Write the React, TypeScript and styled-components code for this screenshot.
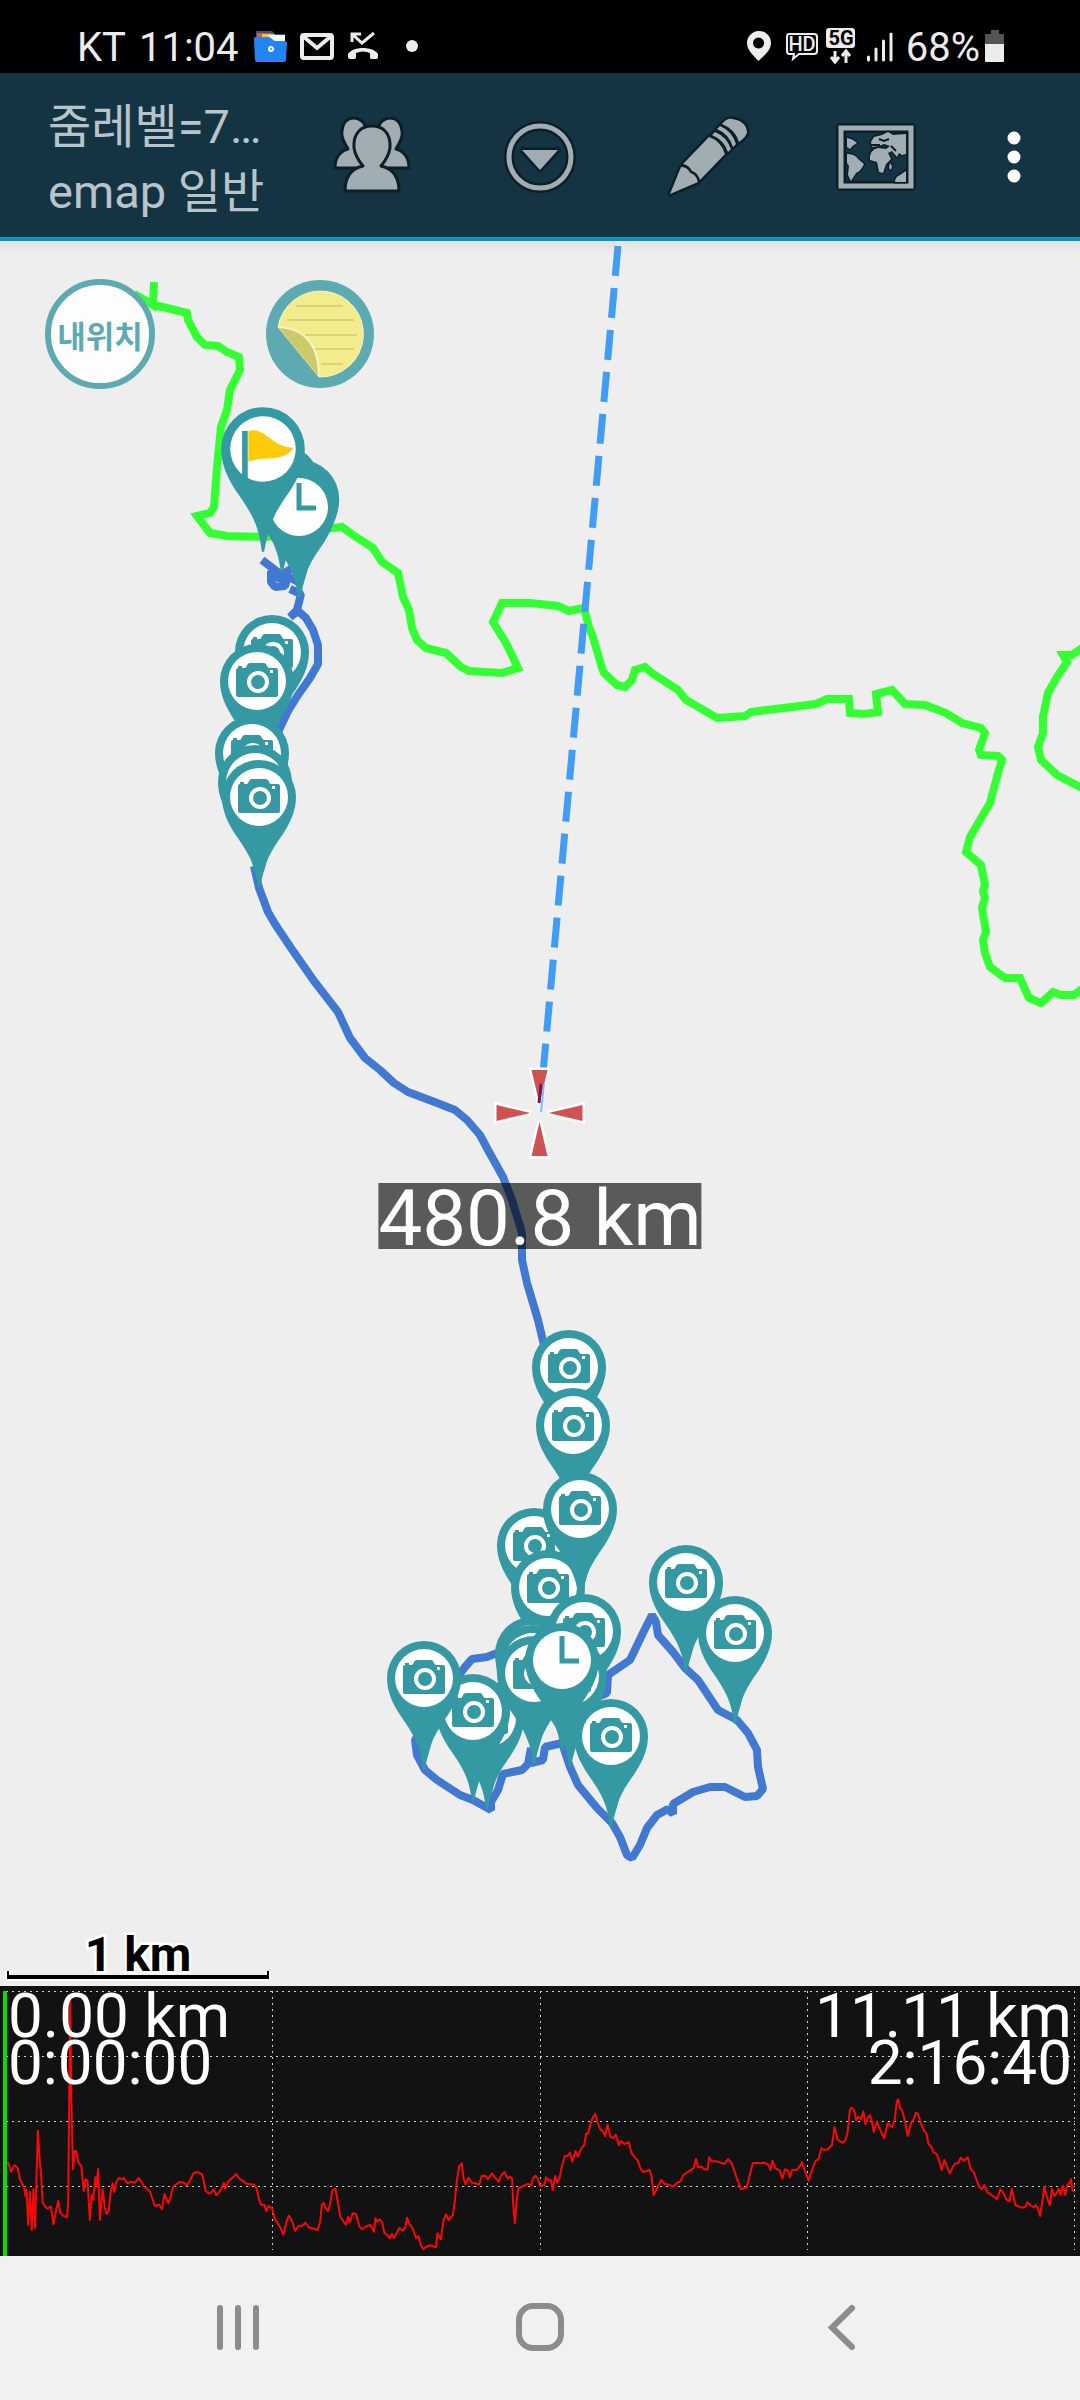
import React from 'react';
import styled, { createGlobalStyle } from 'styled-components';

const teal = '#3499a2';
const iconGrey = '#a0adb3';
const iconEdge = '#0c1f29';

const GlobalStyle = createGlobalStyle`
  *, *::before, *::after { box-sizing: border-box; }
  body {
    margin: 0;
    background: #eeeeee;
    font-family: Roboto, "Noto Sans CJK KR", sans-serif;
  }
  button { font-family: inherit; border: 0; padding: 0; background: none; cursor: pointer; }
  svg { display: block; }
`;

const Screen = styled.div`
  display: flex;
  flex-direction: column;
  min-height: 100vh;
`;

/* ---------- status bar ---------- */

const StatusBar = styled.div`
  display: flex;
  align-items: center;
  justify-content: space-between;
  height: 73px;
  padding: 18px 75px 0 77px;
  background: #000;
  color: #ececec;
  font-size: 40px;
`;

const StatusGroup = styled.div<{ $gap: number }>`
  display: flex;
  align-items: center;
  gap: ${(p) => p.$gap}px;
`;

const StatusText = styled.span`
  padding-top: 4px;
  line-height: 48px;
`;

function FolderIcon() {
  return (
    <svg width="35" height="32" viewBox="-2 0 35 32">
      <path d="M2 1h16l3 3h10v10H2z" fill="#2b5d8c" />
      <path d="M3 3h14l4 4h-18z" fill="#e0563c" />
      <path d="M8 4h12l4 4H8z" fill="#f3c23c" />
      <path d="M14 5h17v8H20z" fill="#fff" />
      <path d="M0 9q0-2 2-2h12q2 0 4 2l2 1.500q1 .5 2 .5h9q2 0 2 2l-1 17q0 2-2 2H3q-2 0-2-2z" fill="#2384f3" />
      <circle cx="17" cy="19" r="2" fill="none" stroke="#fff" strokeWidth="2" />
    </svg>
  );
}

function MailIcon() {
  return (
    <svg width="34" height="28" viewBox="0 0 34 28" fill="none" stroke="#ececec" strokeWidth="4">
      <rect x="2" y="3" width="30" height="23" rx="2" />
      <path d="M4 5l13 11L30 5" />
    </svg>
  );
}

function MissedCallIcon() {
  return (
    <svg width="32" height="30" viewBox="0 0 32 30">
      <path d="M5 11V3h9M5 3l10 9L27 2" fill="none" stroke="#ececec" strokeWidth="3" />
      <path d="M1 26v-3c5-8 25-8 30 0v3q0 2-2 2h-5q-1 0-1-2v-4q-7-3-14 0v4q0 2-1 2H3q-2 0-2-2z" fill="#ececec" />
    </svg>
  );
}

const MoreDot = styled.span`
  width: 12px;
  height: 12px;
  margin-left: 14px;
  border-radius: 50%;
  background: #ececec;
`;

function LocationIcon() {
  return (
    <svg width="36" height="38" viewBox="0 0 36 38">
      <path fillRule="evenodd" d="M12.500 4A12 12 0 0 1 25 16c0 7-6 12-12.500 18C7 28 1 23 1 16A12 12 0 0 1 12.500 4zm0 6.500a5.500 5.500 0 1 0 .1 0z" fill="#ececec" />
    </svg>
  );
}

function HdIcon() {
  return (
    <svg width="36" height="38" viewBox="0 0 36 38">
      <path d="M3 7h25q3 0 3 3v14q0 3-3 3H13l-6 5 1-5H3q-2 0-2-3V10q0-3 2-3z" fill="none" stroke="#ececec" strokeWidth="2" />
      <text x="16" y="24" textAnchor="middle" fontSize="20" fontWeight="500" fill="#ececec">HD</text>
    </svg>
  );
}

function NetworkIcon() {
  return (
    <svg width="36" height="38" viewBox="0 0 36 38">
      <rect x="0" y="1" width="29" height="20" rx="3" fill="#ececec" />
      <text x="15" y="18" textAnchor="middle" fontSize="20" fontWeight="700" fill="#000">5G</text>
      <path d="M9 24v11M5 30l4 5 4-5M20 36V25M16 29l4-5 4 5" fill="none" stroke="#ececec" strokeWidth="3" />
    </svg>
  );
}

function SignalIcon() {
  return (
    <svg width="36" height="38" viewBox="0 0 36 38" stroke="#ececec" strokeWidth="3" strokeLinecap="round">
      <path d="M2.500 30v3M10 22v11M17.500 14v19M25 7v26" />
    </svg>
  );
}

function BatteryIcon() {
  return (
    <svg width="21" height="38" viewBox="0 0 21 38">
      <path d="M7 3h8v4h4q1 0 1 1v11H1V8q0-1 1-1h5z" fill="#555" />
      <path d="M1 17h19v17q0 1-1 1H2q-1 0-1-1z" fill="#ececec" />
    </svg>
  );
}

/* ---------- app header ---------- */

const Header = styled.header`
  display: flex;
  align-items: center;
  height: 168px;
  padding: 4px 12px 0 48px;
  background: #143444;
  border-bottom: 4px solid #0d93bf;
`;

const Titles = styled.div`
  flex: 1;
  min-width: 0;
  padding-top: 4px;
  color: #b8c4c9;
  font-size: 47px;
  line-height: 65px;
  white-space: nowrap;
`;

const Title = styled.h1`
  margin: 0;
  font: inherit;
`;

const Subtitle = styled.p`
  margin: 0;
`;

const HeaderButton = styled.button<{ $width: number }>`
  display: flex;
  align-items: center;
  justify-content: center;
  width: ${(p) => p.$width}px;
  height: 160px;
`;

function PeopleIcon() {
  return (
    <svg width="80" height="80" viewBox="0 0 80 80" fill={iconGrey} stroke={iconEdge} strokeWidth="3" strokeLinejoin="round">
      <path d="M3 51c0-13 8-18 13-19-4-7-7-12-6-18 1-10 7-13 12-13s12 4 12 13c0 7-3 12-6 18 5 2 12 6 12 19z" />
      <path d="M40 51c0-13 7-17 12-19-3-6-6-11-6-18 0-9 7-13 12-13s11 3 12 13c1 6-2 11-6 18 5 1 13 6 13 19z" />
      <path d="M13 74c0-17 9-23 18-25-5-6-8-11-9-18C21 15 30 9 40 9s19 6 18 22c-1 7-4 12-9 18 9 2 18 8 18 25z" />
    </svg>
  );
}

function DropdownCircleIcon() {
  return (
    <svg width="80" height="80" viewBox="0 0 80 80">
      <circle cx="40" cy="40" r="31" fill="none" stroke={iconEdge} strokeWidth="10" />
      <circle cx="40" cy="40" r="31" fill="none" stroke={iconGrey} strokeWidth="5" />
      <path d="M22 33h36L40 53z" fill={iconGrey} stroke={iconEdge} strokeWidth="5" strokeLinejoin="round" paintOrder="stroke" />
    </svg>
  );
}

function PencilIcon() {
  return (
    <svg width="84" height="84" viewBox="0 0 84 84" fill={iconGrey} stroke={iconEdge} strokeWidth="5" strokeLinejoin="round" paintOrder="stroke">
      <path d="M4 79L15 52q6 0 9 5 7 3 8 10z" />
      <path d="M17 49l26-27q12 4 16 17L34 65q-2-7-8-9-3-6-9-7z" />
      <path d="M46 20q12 5 16 17l3-3Q61 22 49 17z" />
      <path d="M51 14q12 5 16 18l3-3Q66 16 54 11z" />
      <path d="M56 9q5-6 10-5Q80 6 81 17q0 4-8 10Q69 14 56 9z" />
    </svg>
  );
}

function WorldMapIcon() {
  return (
    <svg width="82" height="76" viewBox="0 0 82 76">
      <path d="M6 9h70v58H6z" fill="none" stroke={iconEdge} strokeWidth="10" strokeLinejoin="round" />
      <path d="M6 9h70v58H6z" fill="none" stroke={iconGrey} strokeWidth="5" />
      <g fill={iconGrey} stroke={iconEdge} strokeWidth="3" strokeLinejoin="round" paintOrder="stroke">
        <path d="M12 19q6 1 10 5-4 2-7 6l-3-2zM12 35q8 0 11 5l6 5q-3 7-8 9l-5 8-3-6 1-9-2-3z" />
        <path d="M36 23l3-5 8-2 6-3 5 3 13-1v20l-4 1-3-2-2 4-5-6-4 2 3 6-5 5-3 9-4-1-2-10-7-2q-1-10 8-12l8 1 4-3-6-2-5 2-7 1z" />
        <path d="M55 44l2 3-1 4-2-2zM71 52v11H60q0-5 5-7z" />
      </g>
      <path d="M36 26h9M44 20l5 2 5-2M56 27l5 5" stroke={iconEdge} strokeWidth="2" fill="none" />
    </svg>
  );
}

function OverflowIcon() {
  return (
    <svg width="14" height="52" viewBox="0 0 14 52" fill="#fff">
      <circle cx="7" cy="7" r="6.500" />
      <circle cx="7" cy="26" r="6.500" />
      <circle cx="7" cy="45" r="6.500" />
    </svg>
  );
}

/* ---------- map ---------- */

const MapArea = styled.main`
  position: relative;
  flex: 1;
  min-height: 600px;
  overflow: hidden;
  background: linear-gradient(#e2e2e2, #eeeeee 14px);
`;

const MapCanvas = styled.svg`
  position: absolute;
  inset: 0;
  width: 100%;
  height: 100%;
`;

const MapTools = styled.div`
  position: absolute;
  top: 38px;
  left: 45px;
  display: flex;
  gap: 110px;
`;

const RoundButton = styled.button`
  display: flex;
  align-items: center;
  justify-content: center;
  width: 110px;
  height: 110px;
  border-radius: 50%;
`;

const MyLocationButton = styled(RoundButton)`
  border: 6px solid #5daab2;
  background: rgba(255, 255, 255, 0.88);
  color: #5daab2;
  font-size: 31px;
  font-weight: 700;
  white-space: nowrap;
`;

const DistanceLabel = styled.output`
  position: absolute;
  top: 54%;
  left: 50%;
  transform: translateX(-50%);
  height: 66px;
  background: rgba(0, 0, 0, 0.625);
  color: #fff;
  font-size: 78px;
  line-height: 72px;
  white-space: nowrap;
`;

const ScaleBar = styled.div`
  position: absolute;
  left: 7px;
  bottom: 7px;
  width: 262px;
`;

const ScaleText = styled.div`
  color: #000;
  font-size: 48px;
  font-weight: 700;
  line-height: 32px;
  text-align: center;
  -webkit-text-stroke: 5px #fff;
  paint-order: stroke fill;
`;

const ScaleLine = styled.div`
  height: 8px;
  border: solid #000;
  border-width: 0 2px 4px;
  filter: drop-shadow(2px 0 0 #fff) drop-shadow(-2px 0 0 #fff) drop-shadow(0 2px 0 #fff);
`;

const NoteIcon = () => (
  <svg width="110" height="110" viewBox="0 0 110 110">
    <circle cx="55" cy="55" r="54" fill="#5daab2" />
    <path d="M13 48A43 43 0 1 1 54 98z" fill="#f3ec8c" stroke="#f8f4c4" strokeWidth="1" />
    <g stroke="#d8d27c" strokeWidth="2">
      <path d="M31 27h47M22 41h67M40 56h52M50 70h39M56 85h22" />
    </g>
    <path d="M13 48Q54 50 54 98z" fill="#cccb69" />
    <path d="M13 48Q54 50 54 98" fill="none" stroke="#f8f4c4" strokeWidth="2" />
  </svg>
);

type PinKind = 'camera' | 'clock' | 'flag' | 'plain';

function Pin({ x, y, kind = 'camera', size = 1 }: { x: number; y: number; kind?: PinKind; size?: number }) {
  return (
    <g transform={`translate(${x} ${y}) scale(${size})`}>
      <path d="M-1 91C-2 84-3 77-5 71-9 58-17 47-24 37-31 26-37 14-37 0A37 37 0 0 1 37 0C37 14 31 26 24 37 17 47 9 58 6 71 4 77 2 84 1 91z" fill={teal} />
      {kind !== 'plain' && <circle r="29" fill="#fff" />}
      {kind === 'camera' && (
        <g>
          <path d="M-21-11q0-2 2-2v-2h4v2h3q1 0 2-3 1-2 3-2h14q2 0 3 3 1 2 2 2h7q2 0 2 2v25q0 2-2 2h-38q-2 0-2-2z" fill={teal} />
          <circle cx="1" cy="1" r="9" fill="none" stroke="#fff" strokeWidth="4" />
          <rect x="13" y="-11" width="3" height="3" fill="#fff" />
        </g>
      )}
      {kind === 'clock' && <path d="M0-24V1H17" fill="none" stroke={teal} strokeWidth="5" />}
      {kind === 'flag' && (
        <g>
          <path d="M-16-16V26" stroke={teal} strokeWidth="5" />
          <path d="M-13-16C2-20 8-1 27-1 18 12 6 6-13 11z" fill="#fdcb0a" />
        </g>
      )}
    </g>
  );
}

const pins: Array<{ x: number; y: number; kind?: PinKind; size?: number }> = [
  { x: 282, y: 482, kind: 'plain' },
  { x: 300, y: 499, kind: 'plain', size: 1.06 },
  { x: 299, y: 507, kind: 'clock' },
  { x: 263, y: 449, kind: 'flag', size: 1.13 },
  { x: 272, y: 652 },
  { x: 257, y: 681 },
  { x: 252, y: 753 },
  { x: 255, y: 782 },
  { x: 259, y: 797 },
  { x: 569, y: 1367 },
  { x: 573, y: 1425 },
  { x: 534, y: 1545 },
  { x: 548, y: 1587 },
  { x: 580, y: 1509 },
  { x: 487, y: 1718 },
  { x: 473, y: 1711 },
  { x: 424, y: 1678 },
  { x: 584, y: 1631 },
  { x: 532, y: 1654 },
  { x: 533, y: 1662 },
  { x: 570, y: 1676 },
  { x: 534, y: 1673 },
  { x: 562, y: 1660, kind: 'clock' },
  { x: 611, y: 1736 },
  { x: 686, y: 1582 },
  { x: 735, y: 1633 },
];

const greenTrack =
  '154,282 153,305 148,302 153,305 167,308 187,313 188,320 197,337 205,345 218,346 227,352 239,357 240,370 230,390 227,410 221,427 217,467 214,507 210,513 197,516 210,533 227,536 267,537 333,528 342,527 353,535 373,548 382,562 398,573 403,597 409,610 412,628 417,640 426,648 446,653 461,667 469,671 502,673 518,668 506,643 493,622 502,603 530,603 558,606 569,611 584,608 589,627 593,637 602,668 604,673 617,685 625,687 632,680 635,670 645,667 652,673 678,690 686,700 717,718 745,716 751,712 816,704 827,699 849,699 850,713 864,714 878,712 876,694 892,690 905,704 925,705 946,713 962,723 981,728 985,733 979,750 981,755 998,756 1002,760 998,773 990,803 970,837 966,852 981,865 985,885 983,891 985,898 982,908 986,932 983,940 985,953 990,967 1005,978 1020,978 1029,998 1041,1003 1053,992 1061,995 1074,995 1082,989';
const greenBranch =
  '1082,648 1072,655 1063,655 1067,662 1057,677 1048,693 1043,717 1043,733 1038,747 1041,760 1057,775 1082,788';
const blueKnot =
  '262,560 275,570 289,580 278,578 271,571 271,582 275,587 285,586 288,576 278,577 292,568 284,574 298,582';
const blueBend =
  '290,589 301,594 297,610 290,617 298,611 306,618 313,630 318,645 318,664 310,678 298,695 288,711 278,732';
const blueRoad =
  '254,866 259,888 268,912 275,924 291,948 314,981 338,1012 350,1038 365,1058 380,1070 394,1083 408,1092 432,1101 455,1110 467,1120 480,1135 488,1150 503,1177 512,1200 522,1233 522,1260 527,1283 538,1320 544,1345';
const blueLoop =
  '497,1653 487,1657 472,1659 465,1667 440,1700 415,1740 417,1755 425,1770 437,1780 460,1795 473,1800 491,1810 491,1802 498,1790 503,1774 522,1770 528,1764 531,1748 531,1763 543,1760 545,1747 562,1743 570,1767 578,1785 597,1808 612,1823 620,1837 627,1855 632,1858 640,1845 647,1828 657,1815 668,1809 673,1814 673,1804 693,1792 710,1787 725,1787 745,1797 757,1796 763,1789 758,1767 757,1750 748,1733 737,1720 718,1710 698,1680 685,1668 673,1652 658,1635 656,1622 652,1615 643,1633 630,1660 608,1675 607,1693 590,1700';

function MapDrawing() {
  return (
    <MapCanvas viewBox="0 241 1080 1745" preserveAspectRatio="xMidYMid slice" role="img" aria-label="Track map">
      <g fill="none" stroke="#33ff33" strokeWidth="8" strokeLinejoin="miter" strokeMiterlimit="2">
        <path d="M134 294l14 8" />
        <polyline points={greenTrack} />
        <polyline points={greenBranch} />
      </g>
      <g fill="none" stroke="#4078d2" strokeWidth="8" strokeLinejoin="bevel">
        <polyline points={blueKnot} />
        <polyline points={blueBend} />
        <polyline points={blueRoad} />
        <polyline points={blueLoop} />
      </g>
      {pins.map((p, i) => (
        <Pin key={i} {...p} />
      ))}
      <path d="M618 246L542 1084" stroke="#419cf5" strokeWidth="7" strokeDasharray="30 12.150" />
      <g fill="#cc4444" fillOpacity=".92" stroke="#fff" strokeWidth="5" paintOrder="stroke" transform="translate(539.500 1113)">
        <path d="M0-9l-8-34h16z" />
        <path d="M0 9l-8 34h16z" />
        <path d="M-9 0l-34-8v16z" />
        <path d="M9 0l34-8v16z" />
      </g>
      <path d="M541 1084l-2 19" stroke="#701c46" strokeWidth="3" />
      <path d="M544 1084l-3 28" stroke="#7dbcf8" strokeWidth="2" />
    </MapCanvas>
  );
}

/* ---------- elevation chart ---------- */

const ChartPanel = styled.section`
  position: relative;
  height: 270px;
  background: #121212;
`;

const ChartCanvas = styled.svg`
  width: 100%;
  height: 270px;
`;

const ChartLegend = styled.div`
  position: absolute;
  inset: 0;
  display: flex;
  justify-content: space-between;
  padding: 6px 8px;
  color: #fff;
  font-size: 62px;
  line-height: 47px;
`;

const Reading = styled.div<{ $end?: boolean }>`
  display: flex;
  flex-direction: column;
  align-items: ${(p) => (p.$end ? 'flex-end' : 'flex-start')};
`;

const profileStart =
  '18,765 24,758 32,785 42,766 52,775 58,808 64,820 70,832 74,858 77,838 82,945 87,845 92,960 97,838 102,955 106,800 110,662 115,745 119,790 124,878 130,888 137,896 148,890 155,942 162,905 169,873 175,908 183,917 194,922 198,880 201,560 204,270 207,560 212,778 216,725 221,722 228,758 236,768 243,843 248,808 254,812 261,930 266,855 271,870 277,802 280,830 285,776 290,930 298,838 304,890 309,912 315,905 321,850 327,820 332,846 338,815 346,803 352,808 360,804 370,820 380,816 392,818 403,804 410,815 420,832 434,842 444,870 450,888 462,884 470,897 478,852 488,880 494,868 502,832 510,824 522,816 535,818 542,826 550,815 562,790 572,786 586,792 592,815 597,843 605,850 613,850 620,838 628,855 640,842 650,818 654,836 662,815 675,803 686,792 695,806 705,812 712,820 722,822 738,824 745,835 752,868 758,884 768,884 773,903 780,888 790,895 798,928 805,937 815,955 823,974 832,935 839,917 848,932 857,962 867,948 876,948 887,938 896,952 912,956 922,960 930,935 934,885 940,878 946,895 953,903 958,885 965,842 974,836 980,870 988,920 996,932 1004,944 1011,920 1016,937 1024,910 1034,912 1044,950 1052,958 1062,950 1075,945 1086,965 1090,925 1096,935 1102,928 1110,938 1116,968 1124,975 1132,985 1138,972 1144,984 1152,968 1160,954 1170,962 1176,955 1182,923 1188,940 1198,955 1208,985 1215,978 1222,1005 1229,1018 1238,1010 1250,1006 1266,1012 1270,970 1280,988 1288,930 1295,913 1303,930 1315,915 1320,880 1326,815 1333,770 1341,760 1346,805 1352,823 1361,803 1370,818 1380,820 1392,824 1398,798 1410,797 1416,808 1429,790 1438,803 1448,815 1456,795 1465,786 1474,806 1480,800 1487,805 1490,880 1495,940 1500,870 1505,835 1520,828 1532,822 1543,825 1548,805 1555,797 1562,808';
const profileEnd =
  '0,678 12,676 18,652 26,662 32,660 37,690 44,648 50,668 57,655 62,625 72,588 80,588 87,578 94,605 103,573 110,590 120,565 128,556 134,522 140,520 150,480 160,461 168,490 176,510 182,512 189,528 196,494 204,530 213,534 220,524 229,556 235,543 245,552 258,547 265,578 275,592 284,602 292,626 300,636 318,630 324,650 330,706 340,685 352,660 362,672 375,674 386,680 398,668 408,664 416,645 430,635 446,625 453,597 460,622 470,620 476,628 487,628 491,592 498,603 510,604 525,608 536,612 546,597 556,608 565,635 575,665 584,688 600,682 608,650 618,610 630,608 640,610 650,608 664,615 669,630 675,602 684,625 696,632 704,656 712,628 720,632 726,652 732,630 745,630 755,618 761,607 768,630 780,662 790,630 800,603 808,598 817,565 826,570 836,568 848,555 855,502 865,540 878,548 886,542 893,520 900,450 904,443 912,450 918,480 925,470 932,478 939,454 945,493 952,473 958,465 963,480 969,515 978,485 986,505 999,535 1010,490 1022,502 1030,480 1036,425 1040,418 1046,445 1052,452 1060,485 1068,528 1078,487 1085,478 1091,458 1098,462 1106,490 1116,513 1122,520 1128,552 1136,560 1143,578 1152,582 1160,605 1166,630 1174,600 1182,620 1190,641 1198,622 1206,610 1214,610 1222,593 1232,602 1242,592 1250,625 1260,637 1266,655 1275,680 1283,688 1290,675 1300,698 1312,706 1327,718 1337,688 1346,700 1354,718 1363,724 1370,686 1380,735 1398,743 1410,740 1415,727 1424,735 1433,742 1440,736 1447,748 1452,768 1458,730 1464,680 1470,705 1480,736 1487,687 1494,708 1500,700 1506,686 1512,705 1518,677 1525,705 1531,675 1538,668 1542,657 1546,690 1550,696';

// Each half of the recording covers 1568 samples; levels count in thirds of a pixel.
const project = (samples: string, left: number, base: number) =>
  samples
    .split(' ')
    .map((s) => s.split(',').map(Number))
    .map(([t, level]) => `${(left + (t * 540) / 1568).toFixed(1)},${((level - base) / 3).toFixed(1)}`)
    .join(' ');

const profile = `${project(profileStart, 0, 228)} ${project(profileEnd, 540, 78)}`;

function ElevationChart() {
  return (
    <ChartPanel aria-label="Elevation profile">
      <ChartCanvas viewBox="0 0 1080 270" preserveAspectRatio="none">
        <g stroke="#d0d0d0" strokeWidth="1" strokeDasharray="2 4" shapeRendering="crispEdges">
          {[5, 70, 135, 200].map((y) => (
            <path key={y} d={`M6 ${y}.500H1075`} />
          ))}
          {[272, 540, 807, 1074].map((x) => (
            <path key={x} d={`M${x}.500 5V264`} />
          ))}
        </g>
        <polyline points={profile} fill="none" stroke="#f80808" strokeWidth="2" strokeLinejoin="round" />
        <rect x="3" y="5" width="4" height="265" fill="#00e000" />
      </ChartCanvas>
      <ChartLegend>
        <Reading>
          <span>0.00 km</span>
          <span>0:00:00</span>
        </Reading>
        <Reading $end>
          <span>11.11 km</span>
          <span>2:16:40</span>
        </Reading>
      </ChartLegend>
    </ChartPanel>
  );
}

/* ---------- navigation bar ---------- */

const NavBar = styled.nav`
  display: flex;
  height: 144px;
  padding: 0 87px;
  background: #f1f1f1;
`;

const NavButton = styled.button`
  display: flex;
  flex: 1;
  align-items: center;
  justify-content: center;
`;

const NavIcon = styled.svg`
  width: 52px;
  height: 52px;
  fill: none;
  stroke: #8c8c8c;
  stroke-width: 6px;
  stroke-linecap: round;
`;

export default function App() {
  return (
    <Screen>
      <GlobalStyle />
      <StatusBar>
        <StatusGroup $gap={13}>
          <StatusText>KT</StatusText>
          <StatusText>11:04</StatusText>
          <FolderIcon />
          <MailIcon />
          <MissedCallIcon />
          <MoreDot />
        </StatusGroup>
        <StatusGroup $gap={4}>
          <LocationIcon />
          <HdIcon />
          <NetworkIcon />
          <SignalIcon />
          <StatusText>68%</StatusText>
          <BatteryIcon />
        </StatusGroup>
      </StatusBar>
      <Header>
        <Titles>
          <Title>줌레벨=7…</Title>
          <Subtitle>emap 일반</Subtitle>
        </Titles>
        <HeaderButton $width={168} aria-label="Friends"><PeopleIcon /></HeaderButton>
        <HeaderButton $width={168} aria-label="Menu"><DropdownCircleIcon /></HeaderButton>
        <HeaderButton $width={168} aria-label="Edit"><PencilIcon /></HeaderButton>
        <HeaderButton $width={168} aria-label="Maps"><WorldMapIcon /></HeaderButton>
        <HeaderButton $width={108} aria-label="More options"><OverflowIcon /></HeaderButton>
      </Header>
      <MapArea>
        <MapDrawing />
        <MapTools>
          <MyLocationButton>내위치</MyLocationButton>
          <RoundButton aria-label="Notes"><NoteIcon /></RoundButton>
        </MapTools>
        <DistanceLabel>480.8 km</DistanceLabel>
        <ScaleBar>
          <ScaleText>1 km</ScaleText>
          <ScaleLine />
        </ScaleBar>
      </MapArea>
      <ElevationChart />
      <NavBar>
        <NavButton aria-label="Recent apps">
          <NavIcon viewBox="0 0 52 52"><path d="M8 6v39M26 6v39M44 6v39" /></NavIcon>
        </NavButton>
        <NavButton aria-label="Home">
          <NavIcon viewBox="0 0 52 52"><rect x="5" y="4" width="42" height="42" rx="14" /></NavIcon>
        </NavButton>
        <NavButton aria-label="Back">
          <NavIcon viewBox="0 0 52 52"><path d="M36 6L16 25.500 36 45" /></NavIcon>
        </NavButton>
      </NavBar>
    </Screen>
  );
}
